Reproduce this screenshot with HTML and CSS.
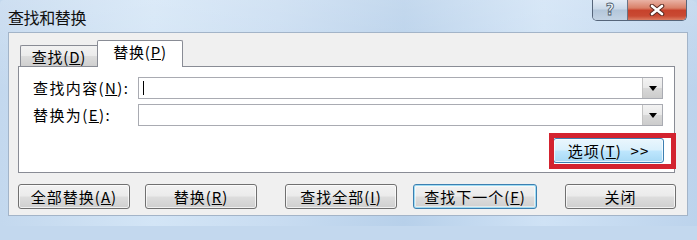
FILE: index.html
```html
<!DOCTYPE html>
<html lang="zh-CN">
<head>
<meta charset="utf-8">
<title>查找和替换</title>
<link rel="stylesheet" href="styles.css">
</head>
<body>
<div class="window">
  <div class="titlebar">
    <div class="title">查找和替换</div>
    <div class="caption-buttons">
      <div class="cap-help"><span class="help-glyph">?</span></div>
      <div class="cap-close">
        <svg width="16" height="12" viewBox="0 0 16 12">
          <path d="M3 2 L13 10 M13 2 L3 10" stroke="#5a2a22" stroke-width="4.6" stroke-linecap="round"/>
          <path d="M3 2 L13 10 M13 2 L3 10" stroke="#ffffff" stroke-width="2.6" stroke-linecap="round"/>
        </svg>
      </div>
    </div>
  </div>
  <div class="client">
    <div class="tabs">
      <div class="tab">查找(<u>D</u>)</div>
      <div class="tab active">替换(<u>P</u>)</div>
    </div>
    <div class="panel">
      <div class="fields">
        <label class="label">查找内容(<u>N</u>):</label>
        <div class="combo"><span class="caret"></span><span class="drop"><span class="tri"></span></span></div>
        <label class="label">替换为(<u>E</u>):</label>
        <div class="combo"><span></span><span class="drop"><span class="tri"></span></span></div>
      </div>
      <div class="options-row">
        <div class="options-wrap">
          <button class="btn hot options">选项(<u>T</u>)&nbsp; &gt;&gt;</button>
          <span class="highlight"></span>
        </div>
      </div>
    </div>
    <div class="actions">
      <button class="btn b-all">全部替换(<u>A</u>)</button>
      <button class="btn b-rep">替换(<u>R</u>)</button>
      <button class="btn b-findall">查找全部(<u>I</u>)</button>
      <button class="btn default b-next">查找下一个(<u>F</u>)</button>
      <button class="btn b-close">关闭</button>
    </div>
  </div>
</div>
</body>
</html>
```
FILE: styles.css
```css
html, body {
  margin: 0;
  padding: 0;
  background: #c3d8ee;
}
body {
  font-family: "Noto Sans CJK SC", "Noto Sans", sans-serif;
  font-size: 15px;
  color: #000;
}
.window {
  width: 697px;
  height: 226px;
  overflow: hidden;
  box-sizing: border-box;
  background:
    linear-gradient(to bottom, rgba(255,255,255,0.18), rgba(255,255,255,0) 40%),
    linear-gradient(to right, #c3d8ee 0%, #d3e5f6 22%, #c8dcf1 40%, #b7d0ea 58%, #cfe2f5 78%, #bcd3ec 100%);
  border-top-left-radius: 4px;
  border-top-right-radius: 6px;
}
.titlebar {
  height: 32px;
  display: flex;
  justify-content: space-between;
  align-items: flex-start;
}
.title {
  padding: 7px 0 0 8px;
  font-size: 16px;
  line-height: 20px;
  color: #111;
  letter-spacing: -0.4px;
}
.caption-buttons {
  display: flex;
  margin-right: 10px;
  height: 21px;
  box-sizing: border-box;
  border: 1px solid #56657a;
  border-top: none;
  border-radius: 0 0 5px 5px;
  overflow: hidden;
}
.cap-help {
  width: 34px;
  display: flex;
  align-items: center;
  justify-content: center;
  background: linear-gradient(to bottom, #e3ecf6 0%, #c9d8e8 45%, #b3c6da 50%, #c3d3e4 100%);
  border-right: 1px solid #6a7485;
}
.help-glyph {
  font-family: "DejaVu Sans", sans-serif;
  font-weight: bold;
  font-size: 15px;
  line-height: 15px;
  color: #eef3f8;
  -webkit-text-stroke: 0.8px #4c5b6c;
}
.cap-close {
  width: 58px;
  display: flex;
  align-items: center;
  justify-content: center;
  background: linear-gradient(to bottom, #e9b2a4 0%, #d98068 40%, #c7422c 52%, #c94a33 80%, #dc7d63 100%);
}
.client {
  margin: 0 9px 0 8px;
  height: 184px;
  box-sizing: border-box;
  background: #f0f0f0;
  border: 1px solid #a3b4c8;
  padding-top: 7px;
}
.tabs {
  display: flex;
  align-items: flex-end;
  height: 26px;
  margin-left: 11px;
  position: relative;
  z-index: 1;
}
.tab {
  height: 21px;
  width: 77px;
  box-sizing: border-box;
  border: 1px solid #898c95;
  border-bottom: none;
  border-right: none;
  background: linear-gradient(to bottom, #f2f2f2 0%, #ebebeb 50%, #dddddd 51%, #cfcfcf 100%);
  border-radius: 2px 0 0 0;
  display: flex;
  align-items: center;
  justify-content: center;
  line-height: 16px;
  padding-top: 2px;
  letter-spacing: 0.8px;
}
.tab.active {
  height: 27px;
  width: 86px;
  margin-bottom: -1px;
  background: #ffffff;
  border-right: 1px solid #898c95;
  border-radius: 2px 2px 0 0;
  padding-top: 0;
  padding-bottom: 4px;
}
.panel {
  margin-left: 9px;
  width: 657px;
  height: 107px;
  box-sizing: border-box;
  background: #ffffff;
  border: 1px solid #898c95;
  padding: 10px 11px 0 14px;
}
.fields {
  display: grid;
  grid-template-columns: 105px 525px;
  grid-auto-rows: 22px;
  row-gap: 5px;
  align-items: center;
}
.label {
  line-height: 18px;
  letter-spacing: 1.4px;
  white-space: nowrap;
}
.combo {
  height: 22px;
  box-sizing: border-box;
  border: 1px solid #a9abb2;
  display: flex;
  justify-content: space-between;
  align-items: center;
  background: #fff;
}
.caret {
  width: 1px;
  height: 14px;
  background: #000;
  margin-left: 4px;
}
.drop {
  width: 20px;
  height: 20px;
  box-sizing: border-box;
  border-left: 1px solid #c3c3c3;
  background: linear-gradient(to bottom, #f3f3f3 0%, #e8e8e8 50%, #d8d8d8 51%, #cccccc 100%);
  display: flex;
  align-items: center;
  justify-content: center;
}
.tri {
  width: 0;
  height: 0;
  border-left: 4px solid transparent;
  border-right: 4px solid transparent;
  border-top: 5px solid #000;
  margin-top: 1px;
}
.options-row {
  display: flex;
  justify-content: flex-end;
  margin-top: 12px;
  margin-right: -1px;
}
.options-wrap {
  position: relative;
  display: flex;
}
.highlight {
  position: absolute;
  left: -4px;
  right: -12px;
  top: -5px;
  bottom: -6px;
  border: 5px solid #d3232f;
  pointer-events: none;
}
.btn {
  font-family: "Noto Sans CJK SC", "Noto Sans", sans-serif;
  font-size: 15px;
  color: #000;
  height: 25px;
  box-sizing: border-box;
  border: 1px solid #707070;
  border-radius: 3px;
  padding: 0;
  line-height: 18px;
  letter-spacing: 1px;
  background: linear-gradient(to bottom, #f2f2f2 0%, #ebebeb 48%, #dddddd 52%, #cfcfcf 100%);
  box-shadow: inset 0 0 0 1px rgba(255,255,255,0.7);
}
.btn.hot {
  border-color: #3c7fb1;
  background: linear-gradient(to bottom, #eaf6fd 0%, #d9f0fc 48%, #bee6fd 52%, #a7d9f5 100%);
}
.btn.default {
  border-color: #3c7fb1;
  box-shadow: inset 0 0 0 1px #9fdcf3, inset 0 0 0 2px rgba(255,255,255,0.5);
}
.options {
  width: 111px;
}
.actions {
  display: flex;
  margin-top: 11px;
  margin-left: 9px;
}
.b-all { width: 112px; }
.b-rep { width: 112px; margin-left: 15px; }
.b-findall { width: 112px; margin-left: 28px; }
.b-next { width: 124px; margin-left: 16px; }
.b-close { width: 111px; margin-left: 28px; }
u {
  text-decoration: underline;
  text-underline-offset: 1px;
}
```
